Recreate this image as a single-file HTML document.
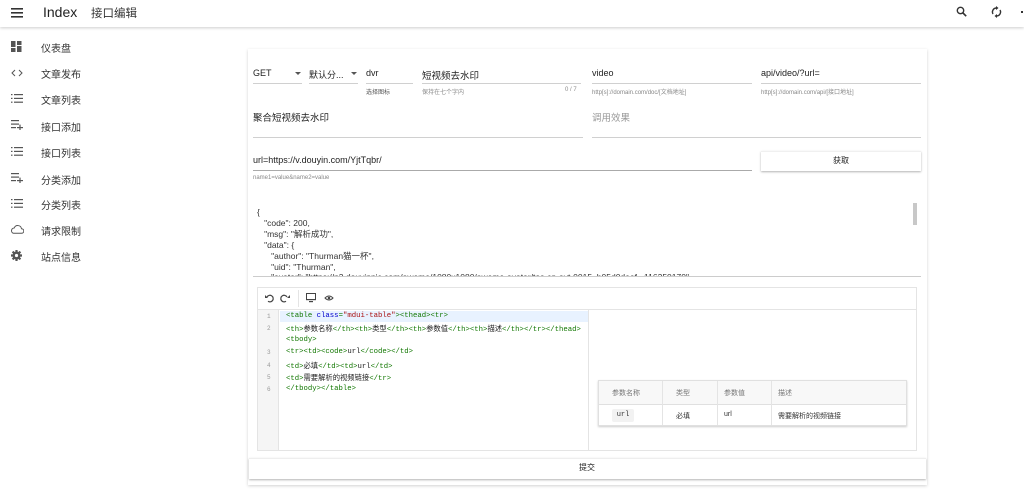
<!DOCTYPE html>
<html><head><meta charset="utf-8"><style>
*{box-sizing:border-box;margin:0;padding:0}
body{width:1024px;height:499px;overflow:hidden;background:#fff;font-family:"Liberation Sans","Noto Sans CJK SC",sans-serif;color:#222;position:relative}
.a{position:absolute}
.hdr{left:0;top:0;width:1024px;height:27px;background:#fff;box-shadow:0 1px 3px rgba(0,0,0,.2);z-index:2}
.nav{font-size:10px;color:#333}
.card{left:248px;top:49px;width:679px;height:436px;background:#fff;box-shadow:0 1px 3px rgba(0,0,0,.18)}
.t{font-size:9.5px;color:#222;white-space:nowrap}
.ul{height:1px;background:#d0d0d0}
.h{font-size:6px;color:#888;white-space:nowrap}
.code{font-family:"Liberation Mono","Noto Sans CJK SC",monospace;font-size:7.3px;color:#170;white-space:nowrap}
.num{font-family:"Liberation Mono",monospace;font-size:6px;color:#999}
.th,.td{font-size:7px;color:#555;white-space:nowrap}
</style></head><body>
<div class="a hdr">
  <svg class="a" style="left:11px;top:8px" width="12" height="10"><rect y="0" width="12" height="1.6" fill="#333"/><rect y="4" width="12" height="1.6" fill="#333"/><rect y="8" width="12" height="1.6" fill="#333"/></svg>
  <div class="a" style="left:43px;top:4px;font-size:14px;color:#222">Index</div>
  <div class="a" style="left:91px;top:5px;font-size:11.5px;color:#333">接口编辑</div>
  <svg class="a" style="left:956px;top:6px" width="11" height="11"><circle cx="4.5" cy="4.5" r="3.2" stroke="#333" stroke-width="1.4" fill="none"/><path d="M7 7l3.2 3.2" stroke="#333" stroke-width="1.6"/></svg>
  <svg class="a" style="left:991px;top:6px" width="11" height="12"><path d="M5.5 2a4 4 0 0 0-3.5 6M5.5 10a4 4 0 0 0 3.5-6" stroke="#333" stroke-width="1.4" fill="none"/><path d="M5 0l2.5 2L5 4zM6 8l-2.5 2L6 12z" fill="#333"/></svg>
  <div class="a" style="left:1021px;top:11px;width:2px;height:2px;background:#333"></div>
</div>
<svg class="a" style="left:11px;top:41px" width="11" height="11"><rect x="0" y="0" width="4.5" height="6" fill="#555"/><rect x="0" y="7" width="4.5" height="4" fill="#555"/><rect x="6" y="0" width="4.5" height="4" fill="#555"/><rect x="6" y="5" width="4.5" height="6" fill="#555"/></svg>
<div class="a nav" style="left:41px;top:40px">仪表盘</div>
<svg class="a" style="left:11px;top:69px" width="12" height="8"><path d="M4 1L1 4l3 3M8 1l3 3-3 3" stroke="#555" stroke-width="1" fill="none"/></svg>
<div class="a nav" style="left:41px;top:66px">文章发布</div>
<svg class="a" style="left:11px;top:94px" width="12" height="9"><g fill="#555"><rect y="0" width="1.5" height="1.2"/><rect x="3" y="0" width="9" height="1.2"/><rect y="3.8" width="1.5" height="1.2"/><rect x="3" y="3.8" width="9" height="1.2"/><rect y="7.6" width="1.5" height="1.2"/><rect x="3" y="7.6" width="9" height="1.2"/></g></svg>
<div class="a nav" style="left:41px;top:92px">文章列表</div>
<svg class="a" style="left:11px;top:120px" width="12" height="10"><g fill="#555"><rect y="0" width="8" height="1.2"/><rect y="3.5" width="8" height="1.2"/><rect y="7" width="5" height="1.2"/><rect x="6" y="7" width="6" height="1.2"/><rect x="8.4" y="4.6" width="1.2" height="5.5"/></g></svg>
<div class="a nav" style="left:41px;top:119px">接口添加</div>
<svg class="a" style="left:11px;top:147px" width="12" height="9"><g fill="#555"><rect y="0" width="1.5" height="1.2"/><rect x="3" y="0" width="9" height="1.2"/><rect y="3.8" width="1.5" height="1.2"/><rect x="3" y="3.8" width="9" height="1.2"/><rect y="7.6" width="1.5" height="1.2"/><rect x="3" y="7.6" width="9" height="1.2"/></g></svg>
<div class="a nav" style="left:41px;top:145px">接口列表</div>
<svg class="a" style="left:11px;top:173px" width="12" height="10"><g fill="#555"><rect y="0" width="8" height="1.2"/><rect y="3.5" width="8" height="1.2"/><rect y="7" width="5" height="1.2"/><rect x="6" y="7" width="6" height="1.2"/><rect x="8.4" y="4.6" width="1.2" height="5.5"/></g></svg>
<div class="a nav" style="left:41px;top:172px">分类添加</div>
<svg class="a" style="left:11px;top:199px" width="12" height="9"><g fill="#555"><rect y="0" width="1.5" height="1.2"/><rect x="3" y="0" width="9" height="1.2"/><rect y="3.8" width="1.5" height="1.2"/><rect x="3" y="3.8" width="9" height="1.2"/><rect y="7.6" width="1.5" height="1.2"/><rect x="3" y="7.6" width="9" height="1.2"/></g></svg>
<div class="a nav" style="left:41px;top:197px">分类列表</div>
<svg class="a" style="left:10px;top:225px" width="14" height="9"><path d="M3.5 8.3h8a2.3 2.3 0 0 0 0-4.6A3.8 3.8 0 0 0 4.2 3 2.7 2.7 0 0 0 3.5 8.3z" stroke="#555" stroke-width="1" fill="none"/></svg>
<div class="a nav" style="left:41px;top:223px">请求限制</div>
<svg class="a" style="left:11px;top:250px" width="11" height="11"><circle cx="5.5" cy="5.5" r="4" fill="#555"/><g stroke="#555" stroke-width="2.2"><path d="M5.5 0v11M0 5.5h11M1.6 1.6l7.8 7.8M9.4 1.6l-7.8 7.8"/></g><circle cx="5.5" cy="5.5" r="1.6" fill="#fff"/></svg>
<div class="a nav" style="left:41px;top:249px">站点信息</div>

<div class="a card"></div>
<div class="a t" style="left:253px;top:68px;font-size:9px">GET</div>
<div class="a" style="left:295px;top:72px;border:3px solid transparent;border-top:3px solid #555"></div>
<div class="a ul" style="left:253px;top:83px;width:49px"></div>
<div class="a t" style="left:309px;top:68px;font-size:9px">默认分...</div>
<div class="a" style="left:351px;top:72px;border:3px solid transparent;border-top:3px solid #555"></div>
<div class="a ul" style="left:309px;top:83px;width:49px"></div>
<div class="a t" style="left:366px;top:68px;font-size:9px">dvr</div>
<div class="a ul" style="left:366px;top:83px;width:47px"></div>
<div class="a h" style="left:366px;top:87px;color:#555">选择图标</div>
<div class="a t" style="left:422px;top:68px">短视频去水印</div>
<div class="a ul" style="left:422px;top:83px;width:159px"></div>
<div class="a h" style="left:422px;top:87px">保持在七个字内</div>
<div class="a h" style="left:565px;top:87px">0 / 7</div>
<div class="a t" style="left:592px;top:68px;font-size:9px">video</div>
<div class="a ul" style="left:592px;top:83px;width:160px"></div>
<div class="a h" style="left:592px;top:87px">http[s]://domain.com/doc/[文档地址]</div>
<div class="a t" style="left:761px;top:68px;font-size:9px">api/video/?url=</div>
<div class="a ul" style="left:761px;top:83px;width:160px"></div>
<div class="a h" style="left:761px;top:87px">http[s]://domain.com/api/[接口地址]</div>
<div class="a t" style="left:253px;top:110px">聚合短视频去水印</div>
<div class="a ul" style="left:253px;top:137px;width:330px"></div>
<div class="a t" style="left:592px;top:110px;color:#999">调用效果</div>
<div class="a ul" style="left:592px;top:137px;width:329px"></div>
<div class="a t" style="left:253px;top:155px;font-size:9px">url=https://v.douyin.com/YjtTqbr/</div>
<div class="a" style="left:253px;top:170px;width:499px;height:1px;background:#aaa"></div>
<div class="a h" style="left:253px;top:175px">name1=value&amp;name2=value</div>
<div class="a" style="left:761px;top:151px;width:160px;height:20px;box-shadow:0 1px 2px rgba(0,0,0,.3);border-top:1px solid #f0f0f0"></div>
<div class="a t" style="left:833px;top:155px;font-size:8px">获取</div>
<div class="a" style="left:257px;top:207px;font-size:8.5px;line-height:10.9px;color:#333;white-space:pre;height:69px;overflow:hidden;width:650px">{
   "code": 200,
   "msg": "解析成功",
   "data": {
      "author": "Thurman猫一杯",
      "uid": "Thurman",
      "avatar": "https://p3.douyinpic.com/aweme/1080x1080/aweme-avatar/tos-cn-avt-0015_b05d0deef...116350170"</div>
<div class="a" style="left:913px;top:203px;width:4px;height:22px;background:#c8c8c8"></div>
<div class="a ul" style="left:253px;top:276px;width:668px;background:#ccc"></div>
<div class="a" style="left:257px;top:287px;width:660px;height:164px;border:1px solid #e4e4e4"></div>
<div class="a" style="left:257px;top:309px;width:660px;height:1px;background:#e4e4e4"></div>
<svg class="a" style="left:265px;top:294px" width="40" height="9"><path d="M2 3a3.3 3.3 0 1 1 1 4.3" stroke="#444" stroke-width="1.2" fill="none"/><path d="M0 1l3 3H0z" fill="#444"/><path d="M28 3a3.3 3.3 0 1 0-1 4.3" stroke="#444" stroke-width="1.2" fill="none" transform="translate(-6 0)"/><path d="M25 1l-3 3h3z" fill="#444"/></svg>
<div class="a" style="left:298px;top:290px;width:1px;height:17px;background:#e4e4e4"></div>
<svg class="a" style="left:306px;top:293px" width="30" height="10"><rect x="0.5" y="0.5" width="9" height="6" fill="none" stroke="#444"/><rect x="0" y="6" width="10" height="1.2" fill="#444"/><rect x="3" y="8" width="4" height="1.2" fill="#444"/><path d="M19 5q4-4 8 0q-4 4-8 0z" stroke="#444" stroke-width="1" fill="none"/><circle cx="23" cy="5" r="1.3" fill="#444"/></svg>
<div class="a" style="left:258px;top:310px;width:21px;height:140px;background:#f5f5f5;border-right:1px solid #e4e4e4"></div>
<div class="a" style="left:280px;top:311px;width:308px;height:11px;background:#e8f2ff"></div>
<div class="a" style="left:588px;top:310px;width:1px;height:140px;background:#e4e4e4"></div>
<div class="a num" style="left:267px;top:313px">1</div>
<div class="a num" style="left:267px;top:325px">2</div>
<div class="a num" style="left:267px;top:349px">3</div>
<div class="a num" style="left:267px;top:362px">4</div>
<div class="a num" style="left:267px;top:374px">5</div>
<div class="a num" style="left:267px;top:386px">6</div>
<div class="a code" style="left:286px;top:312px">&lt;table <span style="color:#00c">class</span>=<span style="color:#a11">"mdui-table"</span>&gt;&lt;thead&gt;&lt;tr&gt;</div>
<div class="a code" style="left:286px;top:324px">&lt;th&gt;<span style="color:#222">参数名称</span>&lt;/th&gt;&lt;th&gt;<span style="color:#222">类型</span>&lt;/th&gt;&lt;th&gt;<span style="color:#222">参数值</span>&lt;/th&gt;&lt;th&gt;<span style="color:#222">描述</span>&lt;/th&gt;&lt;/tr&gt;&lt;/thead&gt;</div>
<div class="a code" style="left:286px;top:336px">&lt;tbody&gt;</div>
<div class="a code" style="left:286px;top:348px">&lt;tr&gt;&lt;td&gt;&lt;code&gt;<span style="color:#222">url</span>&lt;/code&gt;&lt;/td&gt;</div>
<div class="a code" style="left:286px;top:361px">&lt;td&gt;<span style="color:#222">必填</span>&lt;/td&gt;&lt;td&gt;<span style="color:#222">url</span>&lt;/td&gt;</div>
<div class="a code" style="left:286px;top:373px">&lt;td&gt;<span style="color:#222">需要解析的视频链接</span>&lt;/tr&gt;</div>
<div class="a code" style="left:286px;top:385px">&lt;/tbody&gt;&lt;/table&gt;</div>
<div class="a" style="left:598px;top:380px;width:309px;height:46px;border:1px solid #e0e0e0;box-shadow:0 1px 2px rgba(0,0,0,.2)"></div>
<div class="a" style="left:599px;top:381px;width:307px;height:24px;background:#f8f8f8;border-bottom:1px solid #e0e0e0"></div>
<div class="a" style="left:662px;top:381px;width:1px;height:44px;background:#e4e4e4"></div>
<div class="a" style="left:717px;top:381px;width:1px;height:44px;background:#e4e4e4"></div>
<div class="a" style="left:771px;top:381px;width:1px;height:44px;background:#e4e4e4"></div>
<div class="a th" style="left:612px;top:388px;color:#777">参数名称</div>
<div class="a th" style="left:676px;top:388px;color:#777">类型</div>
<div class="a th" style="left:724px;top:388px;color:#777">参数值</div>
<div class="a th" style="left:778px;top:388px;color:#777">描述</div>
<div class="a" style="left:612px;top:409px;width:22px;height:13px;background:#f2f2f2;border-radius:2px;font-family:'Liberation Mono',monospace;font-size:7px;color:#333;text-align:center;line-height:13px">url</div>
<div class="a td" style="left:676px;top:411px;color:#333">必填</div>
<div class="a td" style="left:724px;top:411px;color:#333">url</div>
<div class="a td" style="left:778px;top:411px;color:#333">需要解析的视频链接</div>
<div class="a" style="left:249px;top:458px;width:677px;height:21px;box-shadow:0 1px 2px rgba(0,0,0,.3);border-top:1px solid #eee"></div>
<div class="a t" style="left:579px;top:462px;font-size:8px">提交</div>
</body></html>
